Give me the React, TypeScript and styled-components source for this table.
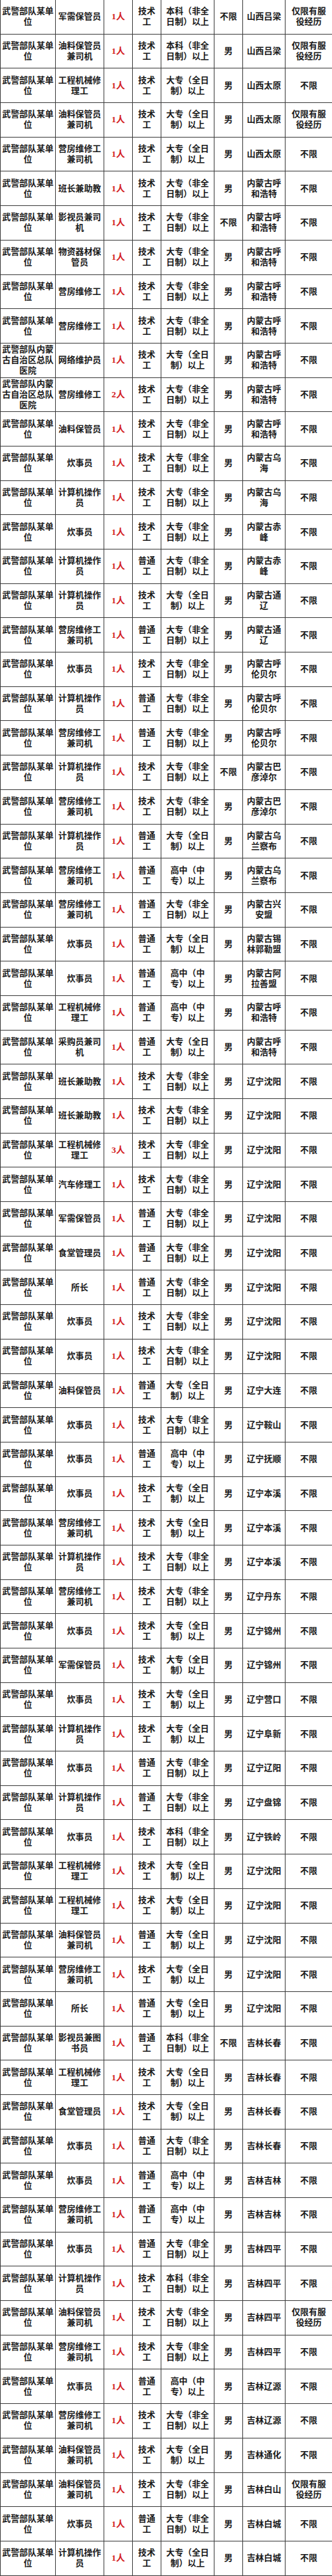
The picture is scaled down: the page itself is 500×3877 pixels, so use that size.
import React from "react";
import styled, { createGlobalStyle } from "styled-components";

const GlobalStyle = createGlobalStyle`
  html, body {
    margin: 0;
    padding: 0;
    background: #fff;
  }
  body {
    font-family: "Liberation Serif", "Noto Sans CJK SC", serif;
    color: #1a1a1a;
  }
`;

const UNIT = "武警部队某单位";
const HOSPITAL = "武警部队内蒙古自治区总队医院";
const SERVED = "仅限有服役经历";

// 单位, 岗位, 人数, 工种, 学历, 性别, 地点, 条件
type Job = [string, string, string, string, string, string, string, string];

const jobs: Job[] = [
  [UNIT, "军需保管员", "1人", "技术工", "本科（非全日制）以上", "不限", "山西吕梁", SERVED],
  [UNIT, "油料保管员兼司机", "1人", "技术工", "本科（非全日制）以上", "男", "山西吕梁", SERVED],
  [UNIT, "工程机械修理工", "1人", "技术工", "大专（全日制）以上", "男", "山西太原", "不限"],
  [UNIT, "油料保管员兼司机", "1人", "技术工", "大专（全日制）以上", "男", "山西太原", SERVED],
  [UNIT, "营房维修工兼司机", "1人", "技术工", "大专（全日制）以上", "男", "山西太原", "不限"],
  [UNIT, "班长兼助教", "1人", "技术工", "大专（非全日制）以上", "男", "内蒙古呼和浩特", "不限"],
  [UNIT, "影视员兼司机", "1人", "技术工", "大专（非全日制）以上", "不限", "内蒙古呼和浩特", "不限"],
  [UNIT, "物资器材保管员", "1人", "技术工", "大专（非全日制）以上", "男", "内蒙古呼和浩特", "不限"],
  [UNIT, "营房维修工", "1人", "技术工", "大专（非全日制）以上", "男", "内蒙古呼和浩特", "不限"],
  [UNIT, "营房维修工", "1人", "技术工", "大专（非全日制）以上", "男", "内蒙古呼和浩特", "不限"],
  [HOSPITAL, "网络维护员", "1人", "技术工", "大专（全日制）以上", "男", "内蒙古呼和浩特", "不限"],
  [HOSPITAL, "营房维修工", "2人", "技术工", "大专（非全日制）以上", "男", "内蒙古呼和浩特", "不限"],
  [UNIT, "油料保管员", "1人", "技术工", "大专（非全日制）以上", "男", "内蒙古呼和浩特", "不限"],
  [UNIT, "炊事员", "1人", "技术工", "大专（非全日制）以上", "男", "内蒙古乌海", "不限"],
  [UNIT, "计算机操作员", "1人", "技术工", "大专（非全日制）以上", "男", "内蒙古乌海", "不限"],
  [UNIT, "炊事员", "1人", "技术工", "大专（非全日制）以上", "男", "内蒙古赤峰", "不限"],
  [UNIT, "计算机操作员", "1人", "普通工", "大专（非全日制）以上", "男", "内蒙古赤峰", "不限"],
  [UNIT, "计算机操作员", "1人", "技术工", "大专（全日制）以上", "男", "内蒙古通辽", "不限"],
  [UNIT, "营房维修工兼司机", "1人", "普通工", "大专（非全日制）以上", "男", "内蒙古通辽", "不限"],
  [UNIT, "炊事员", "1人", "技术工", "大专（非全日制）以上", "男", "内蒙古呼伦贝尔", "不限"],
  [UNIT, "计算机操作员", "1人", "普通工", "大专（非全日制）以上", "男", "内蒙古呼伦贝尔", "不限"],
  [UNIT, "营房维修工兼司机", "1人", "普通工", "大专（非全日制）以上", "男", "内蒙古呼伦贝尔", "不限"],
  [UNIT, "计算机操作员", "1人", "技术工", "大专（非全日制）以上", "不限", "内蒙古巴彦淖尔", "不限"],
  [UNIT, "营房维修工兼司机", "1人", "技术工", "大专（非全日制）以上", "男", "内蒙古巴彦淖尔", "不限"],
  [UNIT, "计算机操作员", "1人", "普通工", "大专（全日制）以上", "男", "内蒙古乌兰察布", "不限"],
  [UNIT, "营房维修工兼司机", "1人", "普通工", "高中（中专）以上", "男", "内蒙古乌兰察布", "不限"],
  [UNIT, "营房维修工兼司机", "1人", "普通工", "大专（非全日制）以上", "男", "内蒙古兴安盟", "不限"],
  [UNIT, "炊事员", "1人", "普通工", "大专（全日制）以上", "男", "内蒙古锡林郭勒盟", "不限"],
  [UNIT, "炊事员", "1人", "普通工", "高中（中专）以上", "男", "内蒙古阿拉善盟", "不限"],
  [UNIT, "工程机械修理工", "1人", "普通工", "高中（中专）以上", "男", "内蒙古呼和浩特", "不限"],
  [UNIT, "采购员兼司机", "1人", "普通工", "大专（全日制）以上", "男", "内蒙古呼和浩特", "不限"],
  [UNIT, "班长兼助教", "1人", "技术工", "大专（非全日制）以上", "男", "辽宁沈阳", "不限"],
  [UNIT, "班长兼助教", "1人", "技术工", "大专（非全日制）以上", "男", "辽宁沈阳", "不限"],
  [UNIT, "工程机械修理工", "3人", "技术工", "大专（非全日制）以上", "男", "辽宁沈阳", "不限"],
  [UNIT, "汽车修理工", "1人", "技术工", "大专（非全日制）以上", "男", "辽宁沈阳", "不限"],
  [UNIT, "军需保管员", "1人", "普通工", "大专（非全日制）以上", "男", "辽宁沈阳", "不限"],
  [UNIT, "食堂管理员", "1人", "普通工", "大专（非全日制）以上", "男", "辽宁沈阳", "不限"],
  [UNIT, "所长", "1人", "普通工", "大专（非全日制）以上", "男", "辽宁沈阳", "不限"],
  [UNIT, "炊事员", "1人", "技术工", "大专（非全日制）以上", "男", "辽宁沈阳", "不限"],
  [UNIT, "炊事员", "1人", "技术工", "大专（非全日制）以上", "男", "辽宁沈阳", "不限"],
  [UNIT, "油料保管员", "1人", "普通工", "大专（全日制）以上", "男", "辽宁大连", "不限"],
  [UNIT, "炊事员", "1人", "技术工", "大专（非全日制）以上", "男", "辽宁鞍山", "不限"],
  [UNIT, "炊事员", "1人", "普通工", "高中（中专）以上", "男", "辽宁抚顺", "不限"],
  [UNIT, "炊事员", "1人", "技术工", "大专（全日制）以上", "男", "辽宁本溪", "不限"],
  [UNIT, "营房维修工兼司机", "1人", "技术工", "大专（全日制）以上", "男", "辽宁本溪", "不限"],
  [UNIT, "计算机操作员", "1人", "技术工", "大专（非全日制）以上", "男", "辽宁本溪", "不限"],
  [UNIT, "营房维修工兼司机", "1人", "技术工", "大专（非全日制）以上", "男", "辽宁丹东", "不限"],
  [UNIT, "炊事员", "1人", "技术工", "大专（全日制）以上", "男", "辽宁锦州", "不限"],
  [UNIT, "军需保管员", "1人", "技术工", "大专（全日制）以上", "男", "辽宁锦州", "不限"],
  [UNIT, "炊事员", "1人", "技术工", "大专（全日制）以上", "男", "辽宁营口", "不限"],
  [UNIT, "计算机操作员", "1人", "技术工", "大专（全日制）以上", "男", "辽宁阜新", "不限"],
  [UNIT, "炊事员", "1人", "普通工", "大专（非全日制）以上", "男", "辽宁辽阳", "不限"],
  [UNIT, "计算机操作员", "1人", "普通工", "大专（非全日制）以上", "男", "辽宁盘锦", "不限"],
  [UNIT, "炊事员", "1人", "技术工", "本科（非全日制）以上", "男", "辽宁铁岭", "不限"],
  [UNIT, "工程机械修理工", "1人", "技术工", "大专（全日制）以上", "男", "辽宁沈阳", "不限"],
  [UNIT, "工程机械修理工", "1人", "技术工", "大专（全日制）以上", "男", "辽宁沈阳", "不限"],
  [UNIT, "油料保管员兼司机", "1人", "普通工", "大专（全日制）以上", "男", "辽宁沈阳", "不限"],
  [UNIT, "营房维修工兼司机", "1人", "技术工", "大专（全日制）以上", "男", "辽宁沈阳", "不限"],
  [UNIT, "所长", "1人", "普通工", "大专（全日制）以上", "男", "辽宁沈阳", "不限"],
  [UNIT, "影视员兼图书员", "1人", "普通工", "本科（非全日制）以上", "不限", "吉林长春", "不限"],
  [UNIT, "工程机械修理工", "1人", "技术工", "大专（全日制）以上", "男", "吉林长春", "不限"],
  [UNIT, "食堂管理员", "1人", "技术工", "大专（全日制）以上", "男", "吉林长春", "不限"],
  [UNIT, "炊事员", "1人", "普通工", "大专（非全日制）以上", "男", "吉林长春", "不限"],
  [UNIT, "炊事员", "1人", "普通工", "高中（中专）以上", "男", "吉林吉林", "不限"],
  [UNIT, "营房维修工兼司机", "1人", "普通工", "高中（中专）以上", "男", "吉林吉林", "不限"],
  [UNIT, "炊事员", "1人", "普通工", "大专（非全日制）以上", "男", "吉林四平", "不限"],
  [UNIT, "计算机操作员", "1人", "技术工", "本科（非全日制）以上", "男", "吉林四平", "不限"],
  [UNIT, "油料保管员兼司机", "1人", "技术工", "大专（非全日制）以上", "男", "吉林四平", SERVED],
  [UNIT, "营房维修工兼司机", "1人", "技术工", "大专（非全日制）以上", "男", "吉林四平", "不限"],
  [UNIT, "炊事员", "1人", "普通工", "高中（中专）以上", "男", "吉林辽源", "不限"],
  [UNIT, "营房维修工兼司机", "1人", "技术工", "大专（非全日制）以上", "男", "吉林辽源", "不限"],
  [UNIT, "油料保管员兼司机", "1人", "技术工", "大专（全日制）以上", "男", "吉林通化", "不限"],
  [UNIT, "油料保管员兼司机", "1人", "技术工", "大专（非全日制）以上", "男", "吉林白山", SERVED],
  [UNIT, "炊事员", "1人", "普通工", "大专（非全日制）以上", "男", "吉林白城", "不限"],
  [UNIT, "计算机操作员", "1人", "技术工", "大专（全日制）以上", "男", "吉林白城", "不限"],
];

const Sheet = styled.div`
  width: 500px;
  border-left: 1px solid #3c3c3c;
  box-sizing: border-box;
`;

const Row = styled.div`
  display: grid;
  grid-template-columns: 83px 73px 43px 43px 80px 43px 64px 70px;
  height: calc(3877px / 75);
`;

const Cell = styled.div`
  display: flex;
  align-items: center;
  justify-content: center;
  box-sizing: border-box;
  padding: 0 2px;
  border-right: 1px solid #3c3c3c;
  border-bottom: 1px solid #3c3c3c;
  font-size: 12.9px;
  line-height: 16px;
  font-weight: 700;
  text-align: center;
  text-spacing-trim: space-all;
  overflow: hidden;

  &:last-child {
    border-right: none;
    padding: 0 4px;
  }
`;

const Count = styled(Cell)`
  color: #d3201f;
  font-size: 13.5px;
`;

export default function App() {
  return (
    <>
      <GlobalStyle />
      <Sheet>
        {jobs.map((job, i) => (
          <Row key={i}>
            <Cell>{job[0]}</Cell>
            <Cell>{job[1]}</Cell>
            <Count>{job[2]}</Count>
            <Cell>{job[3]}</Cell>
            <Cell>{job[4]}</Cell>
            <Cell>{job[5]}</Cell>
            <Cell>{job[6]}</Cell>
            <Cell>{job[7]}</Cell>
          </Row>
        ))}
      </Sheet>
    </>
  );
}
